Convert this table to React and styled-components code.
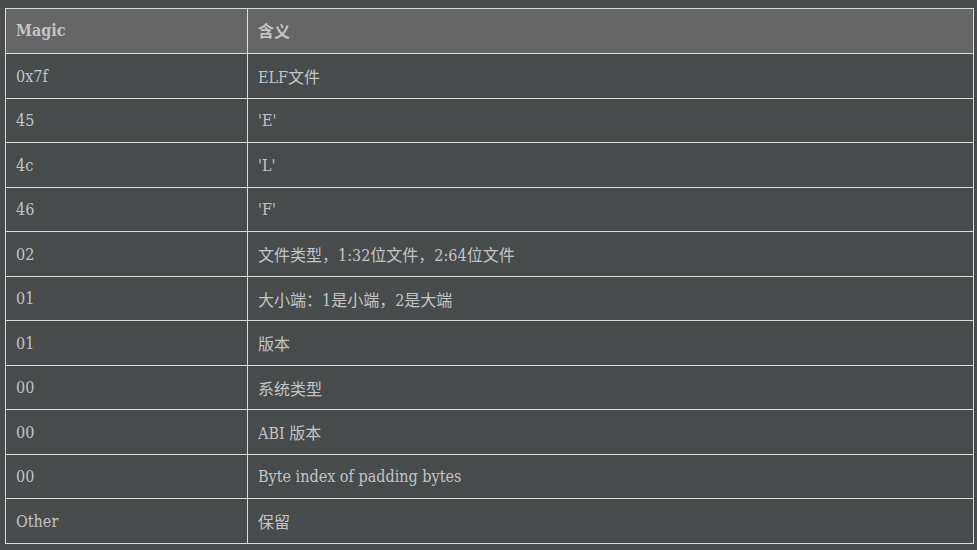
import React from "react";
import styled, { createGlobalStyle } from "styled-components";

const GlobalStyle = createGlobalStyle`
  html, body {
    margin: 0;
    background: #474b4c;
  }
  body {
    padding: 8px 3px 0 5px;
    font-family: "DejaVu Serif", "Noto Sans CJK SC", serif;
    font-stretch: condensed;
    color: #c4c4c4;
  }
`;

const Table = styled.table`
  width: 969px;
  border-collapse: collapse;
  font-size: 16px;
`;

const Head = styled.th`
  background: #656565;
  border: 1px solid #dcdcdc;
  text-align: left;
  font-weight: bold;
  padding: 0 10px 2px;
  height: 42px;
  width: ${(p) => p.width || "auto"};
`;

const Cell = styled.td`
  border: 1px solid #dcdcdc;
  padding: 1px 10px 0;
  height: 42.5px;
`;

const rows = [
  ["0x7f", "ELF文件"],
  ["45", "'E'"],
  ["4c", "'L'"],
  ["46", "'F'"],
  ["02", "文件类型，1:32位文件，2:64位文件"],
  ["01", "大小端：1是小端，2是大端"],
  ["01", "版本"],
  ["00", "系统类型"],
  ["00", "ABI 版本"],
  ["00", "Byte index of padding bytes"],
  ["Other", "保留"],
];

const App = () => {
  return (
    <>
      <GlobalStyle />
      <Table>
        <thead>
          <tr>
            <Head width="221px">Magic</Head>
            <Head>含义</Head>
          </tr>
        </thead>
        <tbody>
          {rows.map(([magic, meaning], i) => (
            <tr key={i}>
              <Cell>{magic}</Cell>
              <Cell>{meaning}</Cell>
            </tr>
          ))}
        </tbody>
      </Table>
    </>
  );
};

export default App;
